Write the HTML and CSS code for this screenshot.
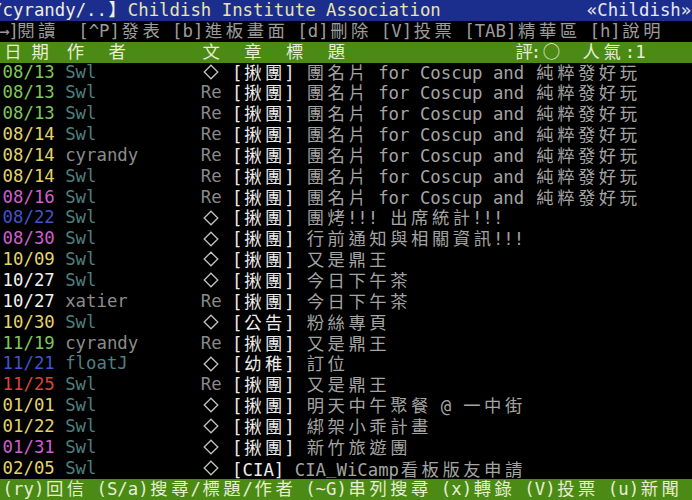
FILE: index.html
```html
<!DOCTYPE html>
<html lang="zh-Hant">
<head>
<meta charset="utf-8">
<title>Childish</title>
<link rel="stylesheet" href="styles.css">
</head>
<body>
<div class="term">
<div class="row title"><span class="lead">/</span><span class="bm">cyrandy/..<span class="c">】</span></span><span class="bname">Childish Institute Association</span>              <span class="bid">«Childish»</span></div>
<div class="row menu"><span class="arw">→</span><span class="brk">]</span><span class="c">閱讀</span>  [^P]<span class="c">發表</span> [b]<span class="c">進板畫面</span> [d]<span class="c">刪除</span> [V]<span class="c">投票</span> [TAB]<span class="c">精華區</span> [h]<span class="c">說明</span></div>
<div class="row bar"><span class="c">日</span> <span class="sh4"><span class="c">期</span></span> <span class="c">作</span>  <span class="c">者</span>       <span class="c">文</span>  <span class="c">章</span>  <span class="c">標</span>  <span class="c">題</span>                <span class="c">評</span><span class="sh4">:<span class="c">○</span></span>  <span class="sh6"><span class="c">人氣</span></span><span class="sh4">:1</span></div>
<div class="row post"><span class="g">08/13</span><span class="t">Swl</span><span class="mk"><svg class="dia" viewBox="0 0 16 16" width="16" height="16"><path d="M8 1.2 L14.8 8 L8 14.8 L1.2 8 Z"/></svg></span><span class="sub"><span class="tag">[<span class="c">揪團</span>]</span> <span class="c">團名片</span> for Coscup and <span class="c">純粹發好玩</span></span></div>
<div class="row post"><span class="g">08/13</span><span class="t">Swl</span><span class="re">Re</span><span class="sub"><span class="tag">[<span class="c">揪團</span>]</span> <span class="c">團名片</span> for Coscup and <span class="c">純粹發好玩</span></span></div>
<div class="row post"><span class="g">08/13</span><span class="t">Swl</span><span class="re">Re</span><span class="sub"><span class="tag">[<span class="c">揪團</span>]</span> <span class="c">團名片</span> for Coscup and <span class="c">純粹發好玩</span></span></div>
<div class="row post"><span class="y">08/14</span><span class="t">Swl</span><span class="re">Re</span><span class="sub"><span class="tag">[<span class="c">揪團</span>]</span> <span class="c">團名片</span> for Coscup and <span class="c">純粹發好玩</span></span></div>
<div class="row post"><span class="y">08/14</span><span class="n">cyrandy</span><span class="re">Re</span><span class="sub"><span class="tag">[<span class="c">揪團</span>]</span> <span class="c">團名片</span> for Coscup and <span class="c">純粹發好玩</span></span></div>
<div class="row post"><span class="y">08/14</span><span class="t">Swl</span><span class="re">Re</span><span class="sub"><span class="tag">[<span class="c">揪團</span>]</span> <span class="c">團名片</span> for Coscup and <span class="c">純粹發好玩</span></span></div>
<div class="row post"><span class="m">08/16</span><span class="t">Swl</span><span class="re">Re</span><span class="sub"><span class="tag">[<span class="c">揪團</span>]</span> <span class="c">團名片</span> for Coscup and <span class="c">純粹發好玩</span></span></div>
<div class="row post"><span class="b">08/22</span><span class="t">Swl</span><span class="mk"><svg class="dia" viewBox="0 0 16 16" width="16" height="16"><path d="M8 1.2 L14.8 8 L8 14.8 L1.2 8 Z"/></svg></span><span class="sub"><span class="tag">[<span class="c">揪團</span>]</span> <span class="c">團烤</span>!!! <span class="c">出席統計</span>!!!</span></div>
<div class="row post"><span class="m">08/30</span><span class="t">Swl</span><span class="mk"><svg class="dia" viewBox="0 0 16 16" width="16" height="16"><path d="M8 1.2 L14.8 8 L8 14.8 L1.2 8 Z"/></svg></span><span class="sub"><span class="tag">[<span class="c">揪團</span>]</span> <span class="c">行前通知與相關資訊</span>!!!</span></div>
<div class="row post"><span class="y">10/09</span><span class="t">Swl</span><span class="mk"><svg class="dia" viewBox="0 0 16 16" width="16" height="16"><path d="M8 1.2 L14.8 8 L8 14.8 L1.2 8 Z"/></svg></span><span class="sub"><span class="tag">[<span class="c">揪團</span>]</span> <span class="c">又是鼎王</span></span></div>
<div class="row post"><span class="w">10/27</span><span class="t">Swl</span><span class="mk"><svg class="dia" viewBox="0 0 16 16" width="16" height="16"><path d="M8 1.2 L14.8 8 L8 14.8 L1.2 8 Z"/></svg></span><span class="sub"><span class="tag">[<span class="c">揪團</span>]</span> <span class="c">今日下午茶</span></span></div>
<div class="row post"><span class="w">10/27</span><span class="n">xatier</span><span class="re">Re</span><span class="sub"><span class="tag">[<span class="c">揪團</span>]</span> <span class="c">今日下午茶</span></span></div>
<div class="row post"><span class="y">10/30</span><span class="t">Swl</span><span class="mk"><svg class="dia" viewBox="0 0 16 16" width="16" height="16"><path d="M8 1.2 L14.8 8 L8 14.8 L1.2 8 Z"/></svg></span><span class="sub"><span class="tag">[<span class="c">公告</span>]</span> <span class="c">粉絲專頁</span></span></div>
<div class="row post"><span class="g">11/19</span><span class="n">cyrandy</span><span class="re">Re</span><span class="sub"><span class="tag">[<span class="c">揪團</span>]</span> <span class="c">又是鼎王</span></span></div>
<div class="row post"><span class="b">11/21</span><span class="t">floatJ</span><span class="mk"><svg class="dia" viewBox="0 0 16 16" width="16" height="16"><path d="M8 1.2 L14.8 8 L8 14.8 L1.2 8 Z"/></svg></span><span class="sub"><span class="tag">[<span class="c">幼稚</span>]</span> <span class="c">訂位</span></span></div>
<div class="row post"><span class="r">11/25</span><span class="t">Swl</span><span class="re">Re</span><span class="sub"><span class="tag">[<span class="c">揪團</span>]</span> <span class="c">又是鼎王</span></span></div>
<div class="row post"><span class="y">01/01</span><span class="t">Swl</span><span class="mk"><svg class="dia" viewBox="0 0 16 16" width="16" height="16"><path d="M8 1.2 L14.8 8 L8 14.8 L1.2 8 Z"/></svg></span><span class="sub"><span class="tag">[<span class="c">揪團</span>]</span> <span class="c">明天中午聚餐</span> @ <span class="c">一中街</span></span></div>
<div class="row post"><span class="y">01/22</span><span class="t">Swl</span><span class="mk"><svg class="dia" viewBox="0 0 16 16" width="16" height="16"><path d="M8 1.2 L14.8 8 L8 14.8 L1.2 8 Z"/></svg></span><span class="sub"><span class="tag">[<span class="c">揪團</span>]</span> <span class="c">綁架小乖計畫</span></span></div>
<div class="row post"><span class="m">01/31</span><span class="t">Swl</span><span class="mk"><svg class="dia" viewBox="0 0 16 16" width="16" height="16"><path d="M8 1.2 L14.8 8 L8 14.8 L1.2 8 Z"/></svg></span><span class="sub"><span class="tag">[<span class="c">揪團</span>]</span> <span class="c">新竹旅遊團</span></span></div>
<div class="row post"><span class="y">02/05</span><span class="t">Swl</span><span class="mk"><svg class="dia" viewBox="0 0 16 16" width="16" height="16"><path d="M8 1.2 L14.8 8 L8 14.8 L1.2 8 Z"/></svg></span><span class="sub"><span class="tag">[CIA]</span> CIA<span class="us">_</span>WiCamp<span class="c">看板版友申請</span></span></div>
<div class="row bar foot">(ry)<span class="c">回信</span> (S/a)<span class="c">搜尋</span>/<span class="c">標題</span>/<span class="c">作者</span> (~G)<span class="c">串列搜尋</span> (x)<span class="c">轉錄</span> (V)<span class="c">投票</span> (u)<span class="c">新聞</span></div>
</div>
</body>
</html>
```

FILE: styles.css
```css
:root {
  --cw: 10.433px;
  --rh: 20.85px;
  --fs: 17.33px;
}

html, body {
  margin: 0;
  padding: 0;
  background: #000;
}

body {
  width: 692px;
  height: 500px;
  overflow: hidden;
  font-family: "DejaVu Sans Mono", "Liberation Mono", monospace;
  font-size: var(--fs);
  color: #a6a6a6;
}

.term {
  display: flex;
  flex-direction: column;
}

.row {
  flex: none;
  height: var(--rh);
  line-height: 18.4px;
  white-space: pre;
  padding-left: 2.6px;
  overflow: visible;
}

.c {
  font-family: "Noto Sans CJK TC", "Noto Sans CJK SC", sans-serif;
  letter-spacing: calc(2 * var(--cw) - var(--fs));
  padding-left: 1.6px;
  margin-right: -1.6px;
  line-height: 1;
}

.lead {
  margin-left: calc(-1 * var(--cw));
}

.sh4 {
  margin-left: -4px;
  margin-right: 4px;
}

.sh6 {
  margin-left: -6px;
  margin-right: 6px;
}

/* title bar */
.title {
  background: #1b2e8e;
  color: #ebe4b0;
}
.title .bm { color: #f1eedc; }
.title .bname { color: #ebe4ae; }
.title .bid { color: #e9e8ee; }

/* menu */
.menu {
  color: #9c9c9c;
}
.arw {
  display: inline-block;
  width: 8.8px;
  margin-left: -3.4px;
  overflow: visible;
}
.brk {
  display: inline-block;
  width: 7.6px;
  text-indent: 0.4px;
  overflow: visible;
}

/* green bars */
.bar {
  background: #4b8a15;
  color: #e6eed4;
}

/* post list */
.post {
  display: grid;
  grid-template-columns: calc(6 * var(--cw)) calc(13 * var(--cw)) calc(3 * var(--cw)) 1fr;
  position: relative;
  z-index: 1;
}

.g { color: #7dc85c; }
.y { color: #e2d46c; }
.m { color: #cf5fd0; }
.b { color: #3f55cc; }
.w { color: #f2f2f2; }
.r { color: #d9443e; }

.t { color: #4e8080; }
.n { color: #8c8c8c; }

.re { color: #8a8a8a; }
.mk { color: #c6c6c6; }

.dia {
  margin-left: 2px;
  vertical-align: -2.3px;
  fill: none;
  stroke: #c2c2c2;
  stroke-width: 1.3;
}

.sub { color: #a4a4a4; }
.tag { color: #ededed; }
.us { vertical-align: 2px; }
```
